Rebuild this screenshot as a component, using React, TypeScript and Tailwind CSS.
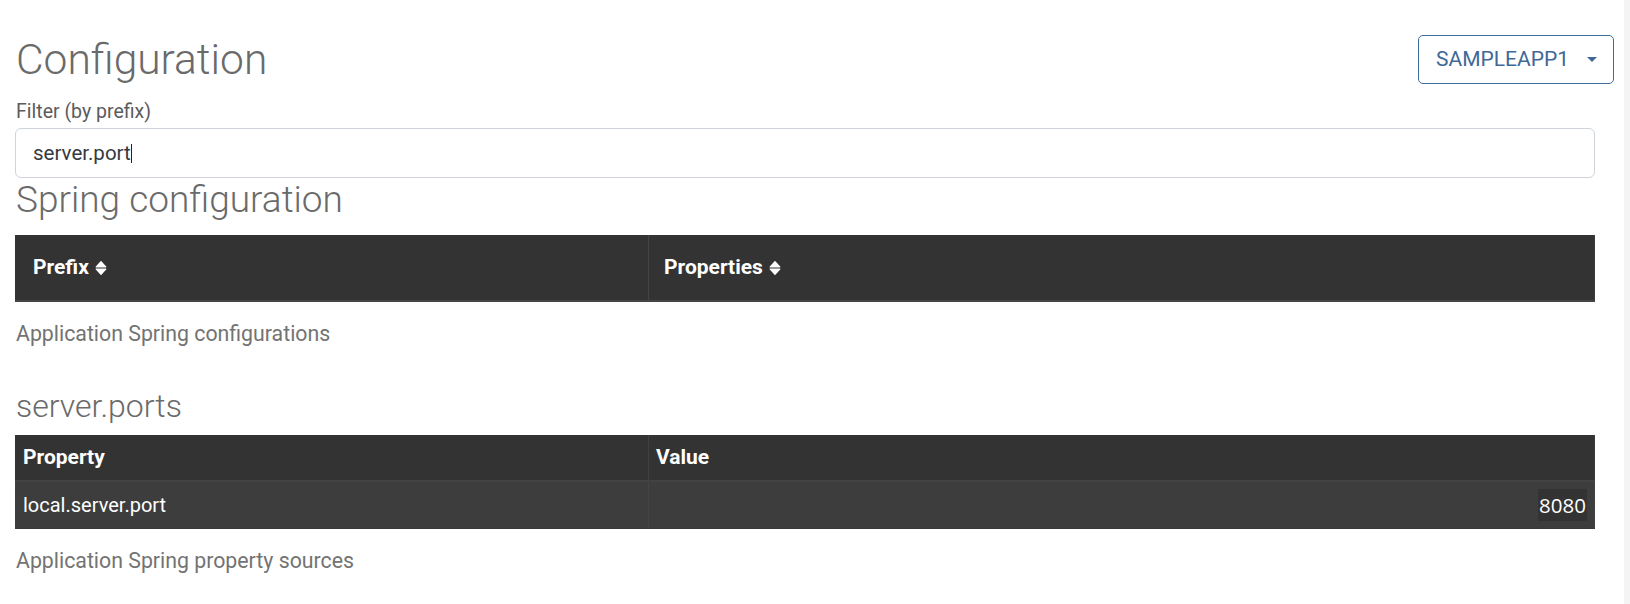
import React from 'react';

function SortIcon() {
  return (
    <svg className="ml-[6px] w-[12px] h-[16px]" viewBox="0 0 12 16" fill="currentColor">
      <path d="M1.2 7 L6 1.6 L10.8 7 Z" strokeLinejoin="round" stroke="currentColor" strokeWidth="1.2" />
      <path d="M1.2 9 L10.8 9 L6 14.4 Z" strokeLinejoin="round" stroke="currentColor" strokeWidth="1.2" />
    </svg>
  );
}

export default function App() {
  return (
    <div className="flex min-h-screen bg-white font-['Roboto','Liberation_Sans',sans-serif]">
      <main className="flex-1 pl-[15px] pr-[10px] pt-[35px]">
        <div className="flex items-start justify-between">
          <h1 className="text-[42.5px] leading-[50px] font-light text-[#6a6a6a] pl-[1px]">Configuration</h1>
          <button className="flex items-center h-[49px] w-[196px] pl-[17px] pr-[16px] border border-[#3d6c9f] rounded-[5px] text-[#3f6898] text-[21px] leading-none">
            <span>SAMPLEAPP1</span>
            <span className="ml-auto w-0 h-0 border-l-[5px] border-r-[5px] border-t-[5px] border-l-transparent border-r-transparent border-t-[#3f6898]" />
          </button>
        </div>

        <div className="pr-[19px]">
          <label className="block mt-[12px] pl-[1px] text-[19.5px] leading-[30px] text-[#5c5c5c]">Filter (by prefix)</label>
          <div className="mt-[1px] flex items-center h-[50px] border border-[#ced4da] rounded-[6px] pl-[17px] text-[20.5px] text-[#343a40]">
            <span>server.port</span>
            <span className="inline-block w-[1.5px] h-[19px] bg-[#222]" />
          </div>

          <h2 className="mt-[1px] pl-[1px] text-[37px] leading-[42px] font-light text-[#6a6a6a]">Spring configuration</h2>

          <div className="mt-[14px] flex h-[67px] bg-[#333333] border-b-2 border-[#454545] text-white text-[21px] font-bold">
            <div className="w-[634px] flex items-center pl-[18px] border-r border-[#444444]">
              Prefix
              <SortIcon />
            </div>
            <div className="flex-1 flex items-center pl-[15px] border-r border-[#3c3c3c]">
              Properties
              <SortIcon />
            </div>
          </div>

          <p className="mt-[17px] pl-[1px] text-[21.3px] leading-[30px] text-[#737373]">Application Spring configurations</p>

          <h3 className="mt-[39px] pl-[1px] text-[32px] leading-[36px] font-light text-[#6a6a6a]">server.ports</h3>

          <div className="mt-[11px] text-[20px] text-white">
            <div className="flex h-[47px] bg-[#333333] border-b-2 border-[#424242] font-bold text-[21px]">
              <div className="w-[634px] flex items-center pl-[8px] border-r border-[#404040]">Property</div>
              <div className="flex-1 flex items-center pl-[7px] border-r border-[#3c3c3c]">Value</div>
            </div>
            <div className="flex h-[47px] bg-[#3d3d3d] border-b border-[#3a3a3a]">
              <div className="w-[634px] flex items-center pl-[8px] border-r border-[#444444]">local.server.port</div>
              <div className="flex-1 flex items-center justify-end pr-[7px] border-r border-[#444444]">
                <span className="h-[32px] px-[1px] flex items-center bg-[#333333] font-['Open_Sans',sans-serif] text-[20.5px]">8080</span>
              </div>
            </div>
          </div>

          <p className="mt-[17px] pl-[1px] text-[21.3px] leading-[30px] text-[#737373]">Application Spring property sources</p>
        </div>
      </main>
      <div className="w-[6px] bg-[#f4f4f4]" />
    </div>
  );
}
